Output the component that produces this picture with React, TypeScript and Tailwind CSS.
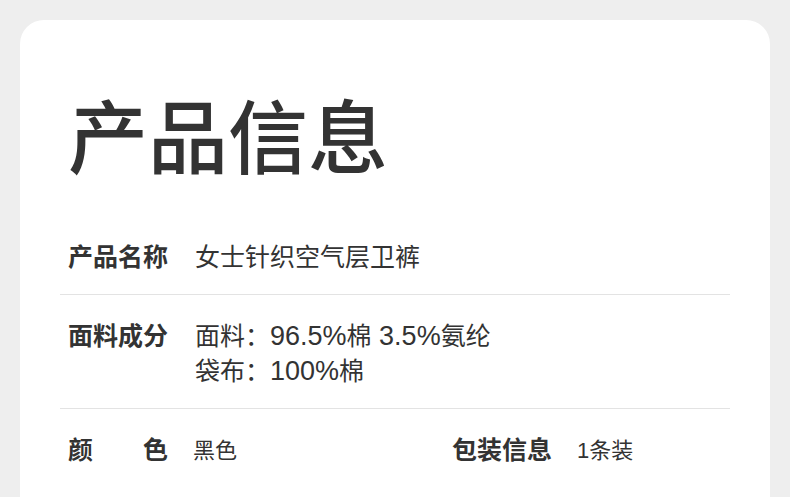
const font = "font-['Liberation_Sans','Noto_Sans_CJK_SC',sans-serif]"

function Row({ label, children }: { label: string; children: React.ReactNode }) {
  return (
    <div className="flex border-b border-[#e3e3e3] pl-2 pt-6 pb-[19px]">
      <div className="w-[127px] shrink-0 text-[25px] font-bold leading-[35px]">{label}</div>
      <div className="text-[25px] leading-[35px]">{children}</div>
    </div>
  )
}

export default function App() {
  return (
    <div className={`min-h-[497px] bg-[#eeeeee] px-5 pt-5 text-[#333333] ${font}`}>
      <div className="h-[477px] rounded-t-[24px] bg-white px-10 pt-20">
        <h1 className="pl-2 text-[80px] font-medium leading-none">产品信息</h1>
        <div className="mt-9">
          <Row label="产品名称">女士针织空气层卫裤</Row>
          <Row label="面料成分">
            <div>
              面料：<span className="text-[27px]">96.5%</span>棉<span className="text-[27px]"> 3.5%</span>氨纶
            </div>
            <div>
              袋布：<span className="text-[27px]">100%</span>棉
            </div>
          </Row>
          <div className="flex items-center pl-2 pt-6 pb-[19px] leading-[35px]">
            <div className="w-[125px] shrink-0 text-[25px] font-bold">颜　　色</div>
            <div className="w-[259px] text-[22px]">黑色</div>
            <div className="w-[125px] shrink-0 text-[25px] font-bold">包装信息</div>
            <div className="text-[22px]">1条装</div>
          </div>
        </div>
      </div>
    </div>
  )
}
